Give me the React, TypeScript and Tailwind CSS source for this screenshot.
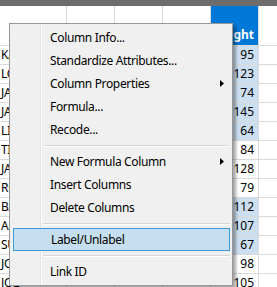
const rows = [
  { name: "KATIE", weight: 95, sel: true },
  { name: "LOUISE", weight: 123, sel: true },
  { name: "JANE", weight: 74, sel: true },
  { name: "JACLYN", weight: 145, sel: true },
  { name: "LILLIE", weight: 64, sel: true },
  { name: "TIM", weight: 84, sel: false },
  { name: "JAMES", weight: 128, sel: false },
  { name: "ROBERT", weight: 79, sel: false },
  { name: "BARBARA", weight: 112, sel: true },
  { name: "ALICE", weight: 107, sel: true },
  { name: "SUSAN", weight: 67, sel: true },
  { name: "JOHN", weight: 98, sel: false },
  { name: "JOE", weight: 105, sel: false },
];

type Entry =
  | { kind: "item"; label: string; sub?: boolean; active?: boolean }
  | { kind: "sep" };

const menu: Entry[] = [
  { kind: "item", label: "Column Info..." },
  { kind: "item", label: "Standardize Attributes..." },
  { kind: "item", label: "Column Properties", sub: true },
  { kind: "item", label: "Formula..." },
  { kind: "item", label: "Recode..." },
  { kind: "sep" },
  { kind: "item", label: "New Formula Column", sub: true },
  { kind: "item", label: "Insert Columns" },
  { kind: "item", label: "Delete Columns" },
  { kind: "sep" },
  { kind: "item", label: "Label/Unlabel", active: true },
  { kind: "sep" },
  { kind: "item", label: "Link ID" },
];

function ContextMenu() {
  return (
    <div className="absolute left-[9px] top-[23px] w-[224px] border border-[#979797] bg-[#f0f0f0] pt-[2px] pb-[2px] pl-[3px] pr-[2px] shadow-[3px_3px_3px_rgba(0,0,0,0.35)]">
      {/* gutter line */}
      <div className="absolute left-[30px] top-0 bottom-0 w-[2px] border-l border-[#e2e3e3] bg-white" />
      {menu.map((e, i) =>
        e.kind === "sep" ? (
          <div key={i} className="relative h-[9px] pl-[30px] pt-[4px]">
            <div className="h-px bg-[#d7d7d7]" />
            <div className="h-px bg-white" />
          </div>
        ) : (
          <div
            key={i}
            className={`relative flex h-[23px] items-center pl-[37px] text-[12px] tracking-[-0.35px] text-black ${
              e.active ? "border border-[#3d9bd7] bg-[#c6dff0] pl-[36px]" : ""
            }`}
          >
            <span>{e.label}</span>
            {e.sub && (
              <svg className="absolute right-[6px] top-[8px]" width="4" height="7" viewBox="0 0 4 7">
                <path d="M0 0 L4 3.5 L0 7 Z" fill="#000" />
              </svg>
            )}
          </div>
        )
      )}
    </div>
  );
}

export default function App() {
  return (
    <div
      className="relative h-[287px] w-[277px] overflow-hidden bg-white"
      style={{ fontFamily: '"Noto Sans", "Open Sans", sans-serif' }}
    >
      <div className="h-[6px] bg-[#6d6d6d]" />

      {/* header row */}
      <div className="flex h-[40px] border-b border-[#dadada]">
        <div className="w-[67px] shrink-0 border-r border-[#dadada]" />
        <div className="w-[48px] shrink-0 border-r border-[#dadada]" />
        <div className="w-[48px] shrink-0 border-r border-[#dadada]" />
        <div className="w-[48px] shrink-0 border-r border-[#dadada]" />
        <div className="flex w-[47px] shrink-0 items-end justify-end bg-[#0078d7] pb-[1px] pr-[4px] text-[12px] font-bold text-white">
          Weight
        </div>
        <div className="flex-1 border-l border-[#dadada]" />
      </div>

      {rows.map((r) => (
        <div key={r.name} className="flex h-[19px] border-b border-[#dadada] text-[12px] text-black">
          <div className="flex w-[67px] shrink-0 items-center border-r border-[#dadada] pl-[1px] tracking-[-0.3px]">
            {r.name}
          </div>
          <div className="w-[48px] shrink-0 border-r border-[#dadada]" />
          <div className="w-[48px] shrink-0 border-r border-[#dadada]" />
          <div className="w-[48px] shrink-0 border-r border-[#dadada]" />
          <div
            className={`flex w-[47px] shrink-0 items-center justify-end pr-[4px] ${
              r.sel ? "bg-[#cbdff0]" : "bg-white"
            }`}
          >
            {r.weight}
          </div>
          <div className="flex-1 border-l border-[#dadada]" />
        </div>
      ))}

      <ContextMenu />
    </div>
  );
}
